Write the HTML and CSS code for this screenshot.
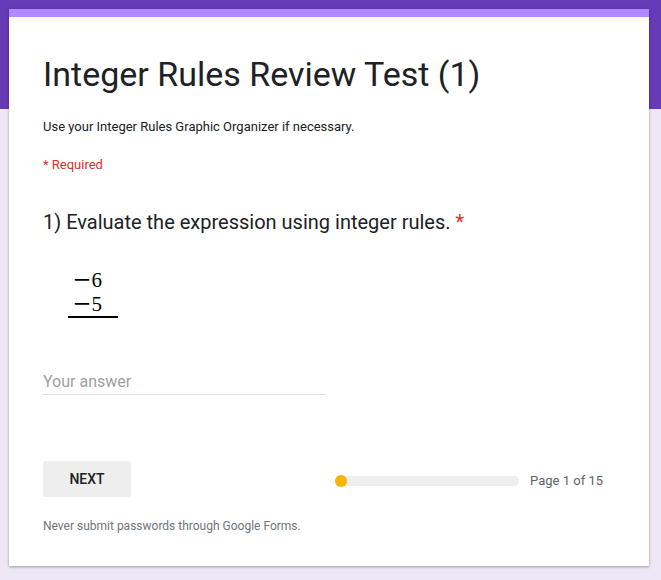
FILE: index.html
```html
<!DOCTYPE html>
<html lang="en">
<head>
<meta charset="utf-8">
<title>Integer Rules Review Test (1)</title>
<link rel="stylesheet" href="styles.css">
</head>
<body>
<div class="card">
  <h1 class="title">Integer Rules Review Test (1)</h1>
  <p class="desc">Use your Integer Rules Graphic Organizer if necessary.</p>
  <p class="required">* Required</p>
  <div class="question">1) Evaluate the expression using integer rules. <span class="star">*</span></div>
  <div class="math">
    <div class="mline"><span class="minus">&minus;</span>6</div>
    <div class="mline"><span class="minus">&minus;</span>5</div>
  </div>
  <div class="answer">Your answer</div>
  <div class="nav">
    <button class="next">NEXT</button>
    <div class="progress">
      <div class="bar"><div class="fill"></div></div>
      <span class="page">Page 1 of 15</span>
    </div>
  </div>
  <p class="footer">Never submit passwords through Google Forms.</p>
</div>
</body>
</html>
```
FILE: styles.css
```css
html, body {
  margin: 0;
  padding: 0;
}
body {
  background: linear-gradient(#673ab7 0, #673ab7 109px, #ede7f6 109px);
  min-height: 580px;
  font-family: Roboto, "Liberation Sans", Arial, sans-serif;
  color: #202124;
  overflow: hidden;
}
.card {
  box-sizing: border-box;
  margin: 9px 0 0 9px;
  width: 640px;
  height: 557px;
  background: #fff;
  border-top: 8px solid #b388ff;
  box-shadow: 0 1px 2px rgba(0,0,0,0.25), 0 1px 4px rgba(0,0,0,0.12);
  padding: 37px 34px 0 34px;
}
.title {
  margin: 0;
  font-size: 34px;
  line-height: 40px;
  font-weight: 400;
  color: #202124;
}
.desc {
  margin: 23px 0 0;
  font-size: 13px;
  line-height: 20px;
  color: #202124;
}
.required {
  margin: 18px 0 0;
  font-size: 13px;
  line-height: 20px;
  color: #d93025;
}
.question {
  margin-top: 33px;
  font-size: 20px;
  line-height: 28px;
  color: #202124;
}
.star {
  color: #d93025;
}
.math {
  margin: 32px 0 0 25px;
  width: 50px;
  box-sizing: border-box;
  padding-right: 16px;
  text-align: right;
  font-family: "Liberation Serif", "Times New Roman", serif;
  font-size: 21px;
  color: #000;
  border-bottom: 2px solid #000;
}
.minus {
  font-family: "DejaVu Serif", serif;
  font-size: 23px;
  line-height: 0;
}
.mline {
  line-height: 24px;
}
.answer {
  margin-top: 52px;
  width: 282px;
  font-size: 16px;
  line-height: 24px;
  color: #a0a0a0;
  border-bottom: 1px solid #e0e0e0;
}
.nav {
  margin-top: 66px;
  display: flex;
  align-items: center;
}
.next {
  width: 88px;
  height: 36px;
  border: none;
  border-radius: 3px;
  background: #eeeeee;
  font-family: Roboto, "Liberation Sans", Arial, sans-serif;
  font-size: 14px;
  font-weight: 500;
  color: #202124;
  padding: 0;
  margin: 0;
}
.progress {
  margin-left: auto;
  margin-right: 12px;
  margin-top: 4px;
  display: flex;
  align-items: center;
  gap: 11px;
}
.bar {
  width: 184px;
  height: 10px;
  border-radius: 5px;
  background: #eeeeee;
  position: relative;
}
.fill {
  position: absolute;
  left: 0;
  top: -1px;
  width: 12px;
  height: 12px;
  border-radius: 50%;
  background: #f4b400;
}
.page {
  font-size: 13px;
  line-height: 20px;
  color: #5f6368;
}
.footer {
  margin: 21px 0 0;
  font-size: 12px;
  line-height: 16px;
  color: #70757a;
}
```
